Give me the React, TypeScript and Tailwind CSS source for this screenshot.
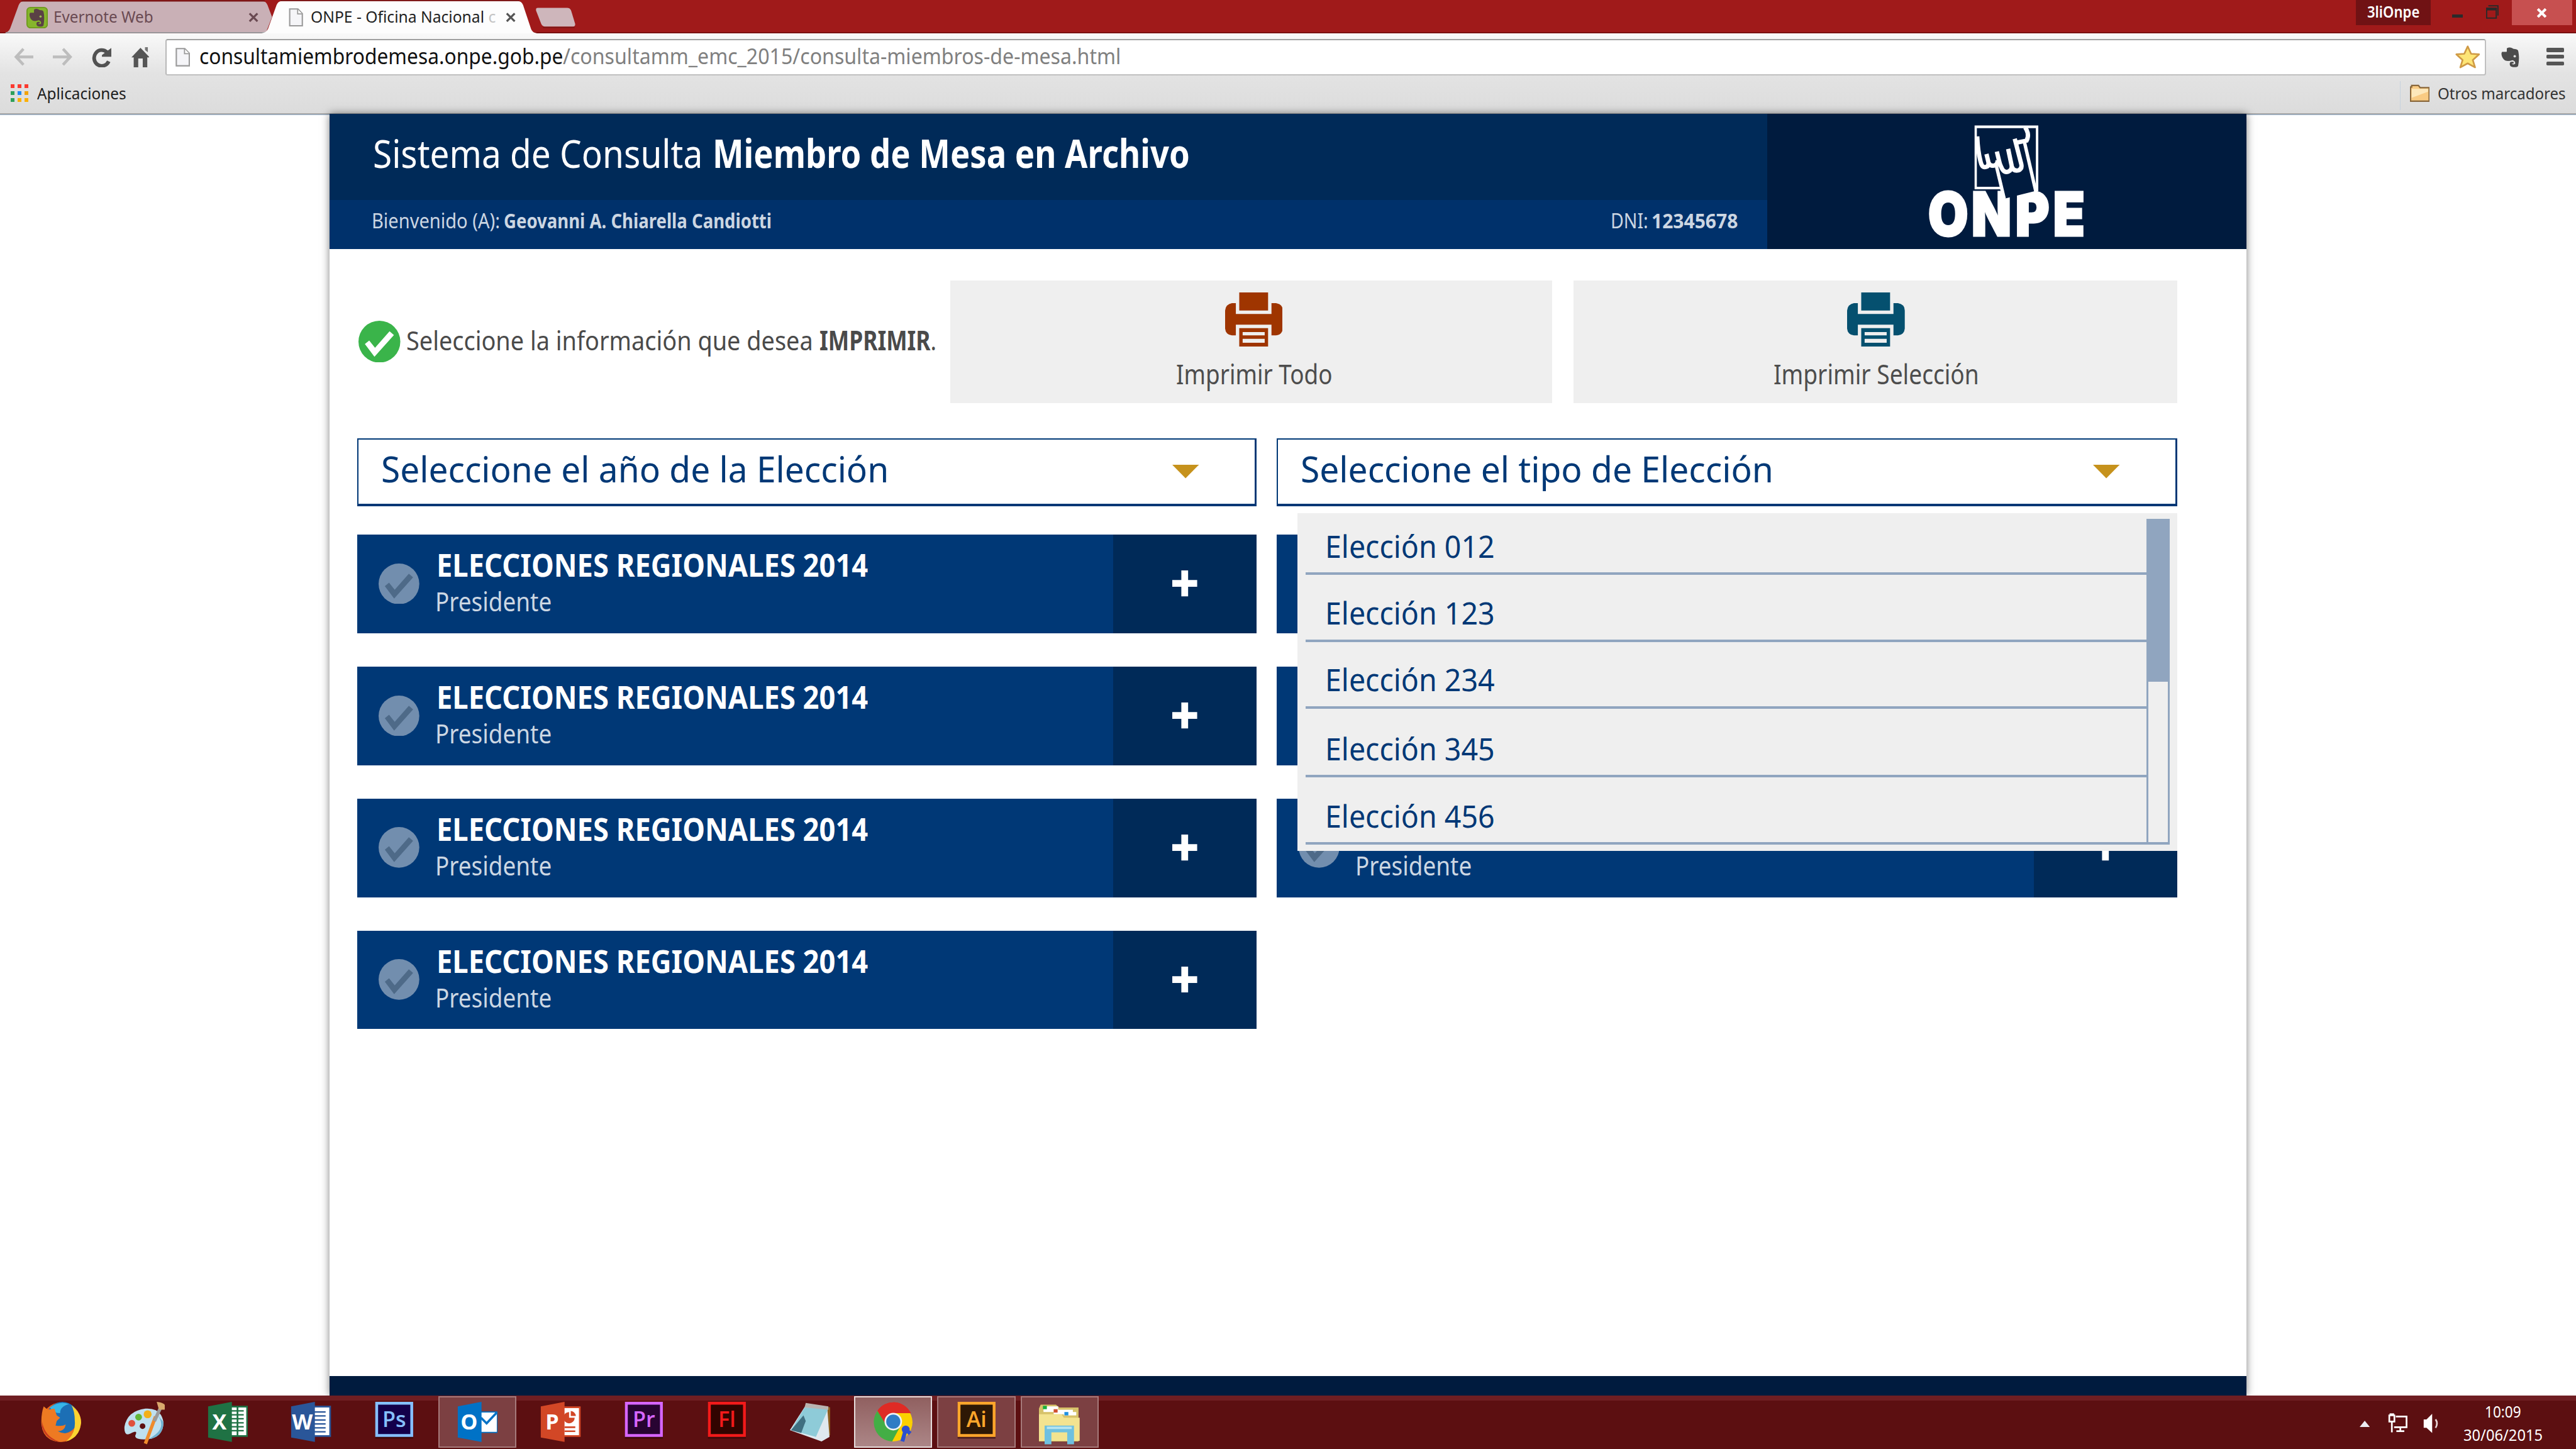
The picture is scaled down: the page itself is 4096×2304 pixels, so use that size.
import { useLayoutEffect, useRef, type ReactNode } from "react";

/** One line of text condensed or widened to the width of its box. */
function Fit({ className, children }: { className: string; children: ReactNode }) {
  const box = useRef<HTMLDivElement>(null);
  const text = useRef<HTMLSpanElement>(null);
  useLayoutEffect(() => {
    if (box.current && text.current) {
      const ratio = box.current.offsetWidth / text.current.offsetWidth;
      text.current.style.transform = `scaleX(${ratio})`;
    }
  }, []);
  return (
    <div ref={box} className={`shrink-0 leading-none whitespace-nowrap ${className}`}>
      <span ref={text} className="block w-max origin-left">
        {children}
      </span>
    </div>
  );
}

/* ---------- Browser chrome ---------- */

function PageIcon({ className }: { className: string }) {
  return (
    <svg viewBox="0 0 26 34" className={`shrink-0 ${className}`}>
      <path d="M1.5 1.5h15l8 8.5v22h-23z" fill="#f5f5f8" stroke="#9a9a9a" strokeWidth="2.4" />
      <path d="M16 2v8.500h8.500" fill="#fff" stroke="#9a9a9a" strokeWidth="2" />
    </svg>
  );
}

function CloseX({ className, width }: { className: string; width: number }) {
  return (
    <svg viewBox="0 0 18 17" className={`shrink-0 ${className}`}>
      <path d="M2 1.500L16 15.500M16 1.500L2 15.500" stroke="currentColor" strokeWidth={width} />
    </svg>
  );
}

const ELEPHANT =
  "M10 2c5-3 9-1 12 1 4 0 7 1 8 3 2 8 2 18 0 27-1 3-10 3-13 1-3-3-2-8 1-8h4v3h-3c0 2 5 2 6 0 0-4-2-5-5-6-6 2-12 2-15-1C1 18-1 11 2 8h8z";

function EvernoteFavicon() {
  return (
    <svg viewBox="0 0 38 38" className="h-[38px] w-[38px] shrink-0">
      <rect x="1" y="1" width="36" height="36" rx="6" fill="#86b52c" stroke="#6d9a1c" strokeWidth="2" />
      <path d={ELEPHANT} transform="translate(5 3) scale(.84 .9)" fill="#5a4145" />
      <circle cx="25" cy="17" r="2" fill="#9bbf4f" />
    </svg>
  );
}

function TitleBar() {
  return (
    <div className="relative flex h-[59px] shrink-0 bg-[#a01a1a]">
      <svg viewBox="0 0 1030 59" className="absolute top-0 left-0 h-[59px] w-[1030px]">
        <rect y="57" width="1030" height="2" fill="#7a1010" />
        <path d="M8 58Q15 57 18 50L33 9Q36 2 42 2H464Q470 2 473 9L481 30L470 58Z" fill="#c9b0b6" />
        <path d="M38 1.500H468" stroke="#7a1414" strokeWidth="2.500" />
        <path d="M10 57.800H472" stroke="#9aa0a4" strokeWidth="2" />
        <path d="M462 59Q471 58 474 51L489 9Q492 2 498 2H916Q922 2 925 9L939 51Q941 58 950 59Z" fill="#fdfdfd" />
        <path d="M496 1H918" stroke="#7a1414" strokeWidth="2" />
        <path d="M951 14H1003Q1008 14 1010 19L1017 42Q1018 47 1013 47H964Q959 47 957 42L948 19Q947 14 951 14Z" fill="#ceb6bb" />
        <path d="M960 48.500H1016" stroke="#7a1414" strokeWidth="2" />
      </svg>
      <div className="relative flex w-[482px] pt-[12px] pl-[47px] text-[#6a4a52]">
        <EvernoteFavicon />
        <Fit className="mt-[2px] ml-[10px] w-[176px] text-[29px]">Evernote Web</Fit>
        <CloseX className="mt-[10px] ml-[168px] h-[17px] w-[18px]" width={3.6} />
      </div>
      <div className="relative flex pt-[14px] pl-[28px]">
        <PageIcon className="h-[33px] w-[26px]" />
        <Fit className="ml-[13px] w-[327px] text-[29px] text-[#222]">
          ONPE - Oficina Nacional <span className="text-[#c4c4c4]">c</span>
        </Fit>
        <CloseX className="mt-[8px] ml-[18px] h-[17px] w-[18px] text-[#555]" width={3.6} />
      </div>
      <div className="ml-auto flex h-[45px] pr-[7px]">
        <div className="h-[45px] w-[132px] bg-[#701214] pt-[7px] pl-[20px]">
          <Fit className="w-[93px] text-[28px] font-semibold text-white">3liOnpe</Fit>
        </div>
        <div className="mt-[26px] ml-[38px] h-[5px] w-[19px] bg-[#2a2a2a]" />
        <svg viewBox="0 0 22 24" className="mt-[9px] ml-[41px] h-[24px] w-[22px]">
          <path d="M4 1.500H21V18.500" fill="none" stroke="#2a2a2a" strokeWidth="2.200" />
          <path d="M1 6H18V23H1Z" fill="none" stroke="#2a2a2a" strokeWidth="2.200" />
          <path d="M0 7H19" stroke="#2a2a2a" strokeWidth="5" />
        </svg>
        <div className="ml-[23px] flex h-[45px] w-[107px] justify-center bg-[#c75050] pt-[14px]">
          <CloseX className="h-[17px] w-[19px] text-white" width={4.6} />
        </div>
      </div>
      <div className="absolute right-0 bottom-0 left-[951px] h-[2px] bg-[#7a1010]" />
    </div>
  );
}

function Toolbar() {
  return (
    <div className="h-[144px] shrink-0 border-b-[1.500px] border-[#9ab4d0]">
      <div className="h-full border-b-[3px] border-[#a8a8a8] bg-linear-to-b from-[#f9f9f9] via-[#e3e3e3] to-[#dcdcdc]">
        <div className="flex h-[84px] pt-[10px] pr-[21px] pl-[24px]">
          <svg viewBox="0 0 35 32" className="mt-[16px] h-[32px] w-[35px]">
            <path d="M17 2L4 16L17 30M4 16H35" fill="none" stroke="#bdbdbd" strokeWidth="5" />
          </svg>
          <svg viewBox="0 0 35 32" className="mt-[16px] ml-[34px] h-[32px] w-[35px]">
            <path d="M18 2L31 16L18 30M31 16H0" fill="none" stroke="#bdbdbd" strokeWidth="5" />
          </svg>
          <svg viewBox="0 0 36 36" className="mt-[14px] ml-[33px] h-[36px] w-[36px]">
            <path d="M28 9A13.500 14 0 1 0 31 25" fill="none" stroke="#525252" strokeWidth="6.500" />
            <path d="M36 1V17H19V14Z" fill="#555" />
          </svg>
          <svg viewBox="0 0 32 36" className="mt-[14px] ml-[35px] h-[36px] w-[32px]">
            <path d="M0 18L16 1L32 18H28V36H20V20H12V36H4V18Z" fill="#555" />
            <path d="M24 0H29V9L24 5Z" fill="#777" />
          </svg>
          <div className="ml-[28px] flex h-[64px] w-[4104px] rounded-[4px] border-[3px] border-t-[#a0a0a0] border-r-[#c0c0c0] border-b-[#c0c0c0] border-l-[#b8b8b8] bg-white">
            <PageIcon className="mt-[12px] ml-[16px] h-[36px] w-[26px]" />
            <Fit className="mt-[9px] ml-[16px] w-[643px] text-[38px] text-[#111]">
              consultamiembrodemesa.onpe.gob.pe
            </Fit>
            <Fit className="mt-[9px] w-[987px] text-[38px] text-[#808080]">
              /consultamm_emc_2015/consulta-miembros-de-mesa.html
            </Fit>
            <svg viewBox="0 0 44 42" className="mt-[9px] mr-[8px] ml-auto h-[42px] w-[44px]">
              <path
                d="M22 2L28 15L42 16L31 26L35 39L22 32L9 39L13 26L2 16L16 15Z"
                fill="#fde576"
                stroke="#cf9a45"
                strokeWidth="3"
                strokeLinejoin="round"
              />
            </svg>
          </div>
          <svg viewBox="0 0 32 36" className="mt-[14px] ml-[27px] h-[36px] w-[32px]">
            <path d={ELEPHANT} fill="#4c4c4c" />
            <path d="M2 8L9 2V8Z" fill="#f4f4f4" />
            <circle cx="24" cy="16" r="2.200" fill="#ddd" />
          </svg>
          <div className="mt-[16px] ml-auto flex w-[31px] flex-col gap-[5px]">
            <div className="h-[7px] rounded-[2px] bg-[#555]" />
            <div className="h-[7px] rounded-[2px] bg-[#555]" />
            <div className="h-[7px] rounded-[2px] bg-[#555]" />
          </div>
        </div>
        <div className="flex pr-[19px] pl-[19px]">
          <div className="mt-[6px] grid h-[31px] w-[31px] grid-cols-3 gap-[5px]">
            <div className="bg-[#fb3a30]" />
            <div className="bg-[#fb3a30]" />
            <div className="bg-[#fb3a30]" />
            <div className="bg-[#2fa05a]" />
            <div className="bg-[#1e8bf5]" />
            <div className="bg-[#f2a30c]" />
            <div className="bg-[#2fa05a]" />
            <div className="bg-[#fbb004]" />
            <div className="bg-[#fbb004]" />
          </div>
          <Fit className="mt-[7px] ml-[16px] w-[158px] text-[29px] text-[#1c1c1c]">Aplicaciones</Fit>
          <div className="ml-auto h-[52px] w-[2px] bg-[#c6d2de]" />
          <svg viewBox="0 0 35 32" className="mt-[6px] ml-[16px] h-[32px] w-[35px]">
            <path d="M3 5V2H15L18 6H34V30H1V5Z" fill="#f9cb83" stroke="#8a683c" strokeWidth="2.500" />
            <path d="M3 8H32V13L3 24Z" fill="#fde8bb" />
          </svg>
          <Fit className="mt-[7px] ml-[14px] w-[226px] text-[29px] text-[#333]">Otros marcadores</Fit>
        </div>
      </div>
    </div>
  );
}

/* ---------- Site ---------- */

function OnpeLogo() {
  return (
    <svg viewBox="0 0 960 690" className="h-[230px] w-[320px]">
      <g fill="#fff">
        <path d="M306 52H644V400H631V66H318V377H450V390H306Z" />
        <text
          x="69 337 607 840"
          y="638"
          transform="scale(.86 1)"
          fontFamily="Inter"
          fontWeight="900"
          fontSize="320"
          stroke="#fff"
          strokeWidth="10"
        >
          ONPE
        </text>
      </g>
      <path d="M428 276L470 439L624 400L572 150L440 270Z" fill="#001b3e" />
      <g fill="none" stroke="#fff" strokeWidth="23">
        <path d="M320 110Q323 190 339 248Q346 278 366 272Q384 267 379 245L369 203" />
        <path d="M380 250Q388 267 408 265Q430 260 428 235M424 190L443 268" />
        <path d="M437 250L452 282Q464 305 486 296Q507 286 502 262L484 176" />
        <path d="M504 270Q512 295 538 290Q559 283 554 258L519 122" />
        <path d="M532 142L582 132Q592 112 588 92Q584 76 574 62" />
        <path d="M422 268L463 440" strokeWidth="18" />
        <path d="M571 142L631 402" strokeWidth="18" />
      </g>
    </svg>
  );
}

function SiteHeader() {
  return (
    <header className="flex h-[239px] bg-[#001b3e]">
      <div className="w-[2542px]">
        <div className="flex h-[153px] bg-[#002a58] pt-[35px] pl-[76px] text-[69px] text-white">
          <Fit className="w-[583px]">Sistema de Consulta</Fit>
          <Fit className="ml-[18px] w-[844px] font-bold">Miembro de Mesa en Archivo</Fit>
        </div>
        <div className="flex h-[86px] bg-[#00316b] pt-[17px] pl-[74px] text-[36px] text-[#ccd6e2]">
          <Fit className="w-[227px]">Bienvenido (A):</Fit>
          <Fit className="ml-[7px] w-[474px] font-bold">Geovanni A. Chiarella Candiotti</Fit>
          <Fit className="ml-auto w-[66px]">DNI:</Fit>
          <Fit className="mr-[52px] ml-[6px] w-[153px] font-bold">12345678</Fit>
        </div>
      </div>
      <div className="pt-[4px] pl-[265px]">
        <OnpeLogo />
      </div>
    </header>
  );
}

function CheckBadge({ className, disc, tick }: { className: string; disc: string; tick: string }) {
  return (
    <svg viewBox="0 0 72 72" className={`shrink-0 ${className}`}>
      <circle cx="36" cy="36" r="36" fill={disc} />
      <path d="M11 40L18.500 34L28.500 46.500L53.500 18L61 24.500L27.500 62Z" fill={tick} />
    </svg>
  );
}

function Printer({ color }: { color: string }) {
  return (
    <svg viewBox="0 0 102 96" className="h-[96px] w-[102px]">
      <g fill={color}>
        <path d="M25 0H76V32H25Z" />
        <path d="M12 19H19V38H82V19H90Q102 21 102 32V64Q101 75 90 76H82V57H19V76H12Q1 75 0 64V32Q1 21 12 19Z" />
        <path
          fillRule="evenodd"
          d="M25 63H76V96H25ZM31 70V76H70V70ZM31 82V89H70V82Z"
        />
      </g>
    </svg>
  );
}

function PrintBar() {
  return (
    <div className="flex h-[217px]">
      <div className="flex w-[1048px] pl-[2px]">
        <CheckBadge className="mt-[71px] h-[74px] w-[74px]" disc="#3ab44a" tick="#fff" />
        <Fit className="mt-[82px] ml-[10px] w-[719px] text-[47px] text-[#4a4a4a]">
          Seleccione la información que desea
        </Fit>
        <Fit className="mt-[82px] ml-[12px] w-[207px] text-[47px] text-[#4a4a4a]">
          <b>IMPRIMIR</b>.
        </Fit>
      </div>
      <button className="flex w-[1064px] flex-col items-center bg-[#efefef] pt-[21px] pl-[10px] text-[48px] text-[#4d4d4d]">
        <Printer color="#9f3500" />
        <Fit className="mt-[24px] w-[276px] text-left">Imprimir Todo</Fit>
      </button>
      <button className="ml-[38px] flex w-[1068px] flex-col items-center bg-[#efefef] pt-[21px] pl-[3px] text-[48px] text-[#4d4d4d]">
        <Printer color="#05506f" />
        <Fit className="mt-[24px] w-[363px] text-left">Imprimir Selección</Fit>
      </button>
    </div>
  );
}

function SelectBox({ width, children }: { width: string; children: string }) {
  return (
    <div className="flex h-[120px] border-[3px] border-r-[4px] border-b-[5px] border-[#003876] bg-white pt-[20px] pr-[99px] pl-[40px]">
      <Fit className={`text-[63px] text-[#003876] ${width}`}>{children}</Fit>
      <svg viewBox="0 0 47 24" className="mt-[25px] ml-auto h-[24px] w-[47px]">
        <path d="M0 0H47L23.500 24Z" fill="#c6921c" />
      </svg>
    </div>
  );
}

function ElectionRow({ title, detail }: { title?: string; detail?: string }) {
  return (
    <div className="flex h-[174.500px] bg-[#003876]">
      <CheckBadge className="mt-[51px] ml-[38px] h-[72px] w-[72px]" disc="#728eae" tick="#4e6a88" />
      <div className="ml-[28px] pt-[26px]">
        <div className="h-[70px] pl-[2px]">
          {title && <Fit className="w-[763px] text-[56px] font-bold text-white">{title}</Fit>}
        </div>
        {detail && <Fit className="w-[206px] text-[46px] text-[#ccd7e3]">{detail}</Fit>}
      </div>
      <div className="ml-auto flex w-[254px] justify-center bg-[#002a58] pt-[64px]">
        <svg viewBox="0 0 44 46" className="h-[46px] w-[44px]">
          <path d="M22 0V46M0 23H44" stroke="#fff" strokeWidth="12" />
        </svg>
      </div>
    </div>
  );
}

const OPTIONS = [
  { label: "Elección 012", height: "h-[99px]" },
  { label: "Elección 123", height: "h-[118px]" },
  { label: "Elección 234", height: "h-[118px]" },
  { label: "Elección 345", height: "h-[122px]" },
  { label: "Elección 456", height: "h-[119px]" },
];

function TypeMenu() {
  return (
    <div className="absolute top-[133px] right-0 flex h-[597px] w-[1556px] bg-[#efefef] pt-[10px] pl-[15px]">
      <ul className="w-[1486px]">
        {OPTIONS.map((option) => (
          <li
            key={option.label}
            className={`flex items-end border-b-[4.500px] border-[#90a5bf] pb-[20px] pl-[34px] ${option.height}`}
          >
            <Fit className="w-[300px] text-[54px] text-[#003876]">{option.label}</Fit>
          </li>
        ))}
      </ul>
      <div className="h-[576px] w-[42px] border-[3.500px] border-b-[4.500px] border-[#90a5bf]">
        <div className="h-[284px] bg-[#90a5bf]" />
      </div>
    </div>
  );
}

const REGIONAL = { title: "ELECCIONES REGIONALES 2014", detail: "Presidente" };

function Site() {
  return (
    <main className="relative -mt-[2px] ml-[583px] flex h-[2267px] w-[3389px] shrink-0 flex-col bg-white shadow-[0_0_14px_rgba(0,0,0,0.5)]">
      <SiteHeader />
      <div className="flex-1 pt-[56px] pl-[49px]">
        <PrintBar />
        <div className="mt-[62px] flex gap-[36px]">
          <div className="w-[1590px]">
            <SelectBox width="w-[898px]">Seleccione el año de la Elección</SelectBox>
            <div className="mt-[50px] flex flex-col gap-[59px]">
              <ElectionRow {...REGIONAL} />
              <ElectionRow {...REGIONAL} />
              <ElectionRow {...REGIONAL} />
              <ElectionRow {...REGIONAL} />
            </div>
          </div>
          <div className="relative w-[1592px]">
            <SelectBox width="w-[836px]">Seleccione el tipo de Elección</SelectBox>
            <div className="mt-[50px] flex flex-col gap-[59px]">
              <ElectionRow />
              <ElectionRow />
              <ElectionRow detail="Presidente" />
            </div>
            <TypeMenu />
          </div>
        </div>
      </div>
      <footer className="h-[35px] bg-[#001b3e]" />
    </main>
  );
}

/* ---------- Taskbar ---------- */

function AppIcon({ children }: { children: ReactNode }) {
  return (
    <svg viewBox="0 0 72 76" className="h-[76px] w-[72px]">
      {children}
    </svg>
  );
}

function AdobeIcon({ letters, color, dark }: { letters: string; color: string; dark: string }) {
  return (
    <AppIcon>
      <rect x="3" y="2" width="67" height="63" fill="#2a0506" opacity=".6" />
      <rect x="3" width="67" height="62" fill={color} />
      <rect x="8" y="5" width="57" height="52" fill={dark} />
      <text x="36.500" y="45" textAnchor="middle" fontSize="38" fontWeight="600" fontFamily="Open Sans" fill={color}>
        {letters}
      </text>
    </AppIcon>
  );
}

function OfficeIcon({ letter, color, children }: { letter: string; color: string; children: ReactNode }) {
  return (
    <AppIcon>
      {children}
      <path d="M1 8L43 0V71L1 63Z" fill={color} />
      <text x="21" y="49" textAnchor="middle" fontSize="38" fontWeight="700" fontFamily="Open Sans" fill="#fff">
        {letter}
      </text>
    </AppIcon>
  );
}

function Firefox() {
  return (
    <AppIcon>
      <circle cx="36" cy="36" r="35" fill="#e8661c" />
      <circle cx="38" cy="28" r="28" fill="#1c6fb5" />
      <path d="M16 10Q32-2 50 4Q34 8 34 20Q22 20 16 10Z" fill="#38b6e8" />
      <path d="M54 6Q72 20 71 38Q68 64 44 70Q62 56 60 34Q60 16 54 6Z" fill="#fbd431" />
      <path d="M5 8L12 14L24 12L28 24L34 28L28 34L26 42Q38 44 44 40Q42 52 30 52Q44 60 58 50Q52 70 34 71Q4 69 1 40Q0 22 5 8Z" fill="#ee7a22" />
      <path d="M2 34Q6 62 34 71Q8 68 2 44Z" fill="#c93a1e" />
    </AppIcon>
  );
}

function Paint() {
  return (
    <AppIcon>
      <path d="M38 12Q66 10 70 36Q70 62 44 66Q20 68 20 60Q26 48 12 56Q0 62 1 44Q6 16 38 12Z" fill="#bfe0ef" />
      <path d="M60 24Q76 46 50 62L44 66Q70 62 70 36Z" fill="#6fb0d0" />
      <circle cx="14" cy="38" r="6" fill="#e0503c" />
      <circle cx="26" cy="27" r="6" fill="#62b83a" />
      <circle cx="42" cy="22" r="7" fill="#f3b018" />
      <circle cx="33" cy="43" r="5" fill="#5c0f11" />
      <path d="M56 26L38 74" stroke="#ef8b2c" strokeWidth="6" />
      <path d="M64 12L54 34" stroke="#9a9a9a" strokeWidth="6" />
      <path d="M58 0Q78 2 72 14H62Z" fill="#d9a86c" />
    </AppIcon>
  );
}

function Notepad() {
  return (
    <AppIcon>
      <path d="M64 8L72 10V58L64 64Z" fill="#8a5c1e" />
      <path d="M28 6L66 10L70 62L56 70L0 50Z" fill="#dfe8ee" />
      <path d="M26 10L68 12L46 62L2 50Z" fill="#8ecbd8" />
      <path d="M24 24L2 50L20 55L28 34Z" fill="#3f6f80" />
      <path d="M28 2L68 8V14L26 10Z" fill="#b9b4b0" />
    </AppIcon>
  );
}

function Chrome() {
  return (
    <AppIcon>
      <circle cx="36" cy="36" r="34" fill="#fbd000" />
      <path d="M8 16A34 34 0 0 1 67 20H36L24 46Z" fill="#df2b25" />
      <path d="M8 16A34 34 0 0 0 34 70L47 46L24 42Z" fill="#43ae45" />
      <path d="M8 16A34 34 0 0 1 67 20H36Z" fill="#df2b25" />
      <circle cx="36" cy="35" r="15.500" fill="#eef2f6" />
      <circle cx="36" cy="35" r="12.500" fill="#2f7cc4" />
      <circle cx="58" cy="49" r="7" fill="#2c50cf" />
      <path d="M58 49L52 70M58 49L66 56" stroke="#2c50cf" strokeWidth="7" />
    </AppIcon>
  );
}

function Explorer() {
  return (
    <AppIcon>
      <path d="M0 70V12L3 5H30L36 10H70V70Z" fill="#d7c26a" />
      <path d="M8 8H34V18H8Z" fill="#fff" />
      <path d="M7 7H14V13H7Z" fill="#18b03c" />
      <path d="M26 14H60V22H26Z" fill="#fff" />
      <path d="M26 13H33V19H26Z" fill="#d05030" />
      <path d="M0 22H40L44 28H72V69H0Z" fill="#f3e390" />
      <path d="M44 18H66V24H44Z" fill="#fff" />
      <path d="M45 18H52V24H45Z" fill="#1e90e0" />
      <path d="M16 75V48H56V75" fill="none" stroke="#6fc0e0" strokeWidth="12" />
      <path d="M14 46H58" stroke="#b5e4f2" strokeWidth="4" />
    </AppIcon>
  );
}

const APPS: { icon: ReactNode; tile: string }[] = [
  { icon: <Firefox />, tile: "border-transparent" },
  { icon: <Paint />, tile: "border-transparent" },
  {
    icon: (
      <OfficeIcon letter="X" color="#1f7244">
        <path d="M40 8.500H70V60.500H40Z" fill="#fff" stroke="#1f7244" strokeWidth="3" />
        <path d="M42 16H64M42 23H64M42 30H64M42 37H64M42 44H64M42 51H64" stroke="#1f7244" strokeWidth="2.500" />
        <path d="M53 10V59" stroke="#1f7244" strokeWidth="3" />
      </OfficeIcon>
    ),
    tile: "border-transparent",
  },
  {
    icon: (
      <OfficeIcon letter="W" color="#2a5699">
        <path d="M40 8.500H70V60.500H40Z" fill="#fff" stroke="#2a5699" strokeWidth="3" />
        <path d="M42 18H62M42 25H62M42 32H62M42 39H62M42 46H62M42 53H62" stroke="#2a5699" strokeWidth="2.500" />
      </OfficeIcon>
    ),
    tile: "border-transparent",
  },
  { icon: <AdobeIcon letters="Ps" color="#86c0ff" dark="#13004a" />, tile: "border-transparent" },
  {
    icon: (
      <OfficeIcon letter="O" color="#0072c6">
        <path d="M40 18H71V54H40Z" fill="#fff" stroke="#0072c6" strokeWidth="2" />
        <path d="M42 28L52 38L70 19" fill="none" stroke="#0072c6" strokeWidth="4" />
      </OfficeIcon>
    ),
    tile: "border-[#a67a7b] bg-[#7c4042]",
  },
  {
    icon: (
      <OfficeIcon letter="P" color="#d24726">
        <path d="M40 9.500H70V60.500H40Z" fill="#fff" stroke="#d24726" strokeWidth="3" />
        <path d="M43 45H62M43 52H62" stroke="#d24726" strokeWidth="3" />
        <path d="M51 18A10 10 0 1 0 61 28H51Z" fill="#d24726" />
        <path d="M54 16A10 10 0 0 1 63 25H54Z" fill="#d24726" />
      </OfficeIcon>
    ),
    tile: "border-transparent",
  },
  { icon: <AdobeIcon letters="Pr" color="#d766ff" dark="#280432" />, tile: "border-transparent" },
  { icon: <AdobeIcon letters="Fl" color="#f31a1a" dark="#320400" />, tile: "border-transparent" },
  { icon: <Notepad />, tile: "border-transparent" },
  { icon: <Chrome />, tile: "border-[#e6dcdc] bg-linear-to-b from-[#906060] to-[#ac8687]" },
  { icon: <AdobeIcon letters="Ai" color="#ffa62b" dark="#2e1805" />, tile: "border-[#a67a7b] bg-[#7c4042]" },
  { icon: <Explorer />, tile: "border-[#a67a7b] bg-[#7c4042]" },
];

function Taskbar() {
  return (
    <div className="relative flex h-[94px] shrink-0 border-t-[9px] border-[#6f1e22] bg-[#5c0f11]">
      <div className="-mt-[8px] flex pl-[35px]">
        {APPS.map((app, i) => (
          <div key={i} className="flex w-[147.100px] justify-center">
            <div className={`flex h-[91px] w-[138px] justify-center border-[3px] pt-[8px] ${app.tile}`}>{app.icon}</div>
          </div>
        ))}
      </div>
      <div className="ml-auto flex pr-[59px] text-white">
        <svg viewBox="0 0 18 11" className="mt-[35px] h-[11px] w-[18px]">
          <path d="M9 0L18 11H0Z" fill="#eceaf0" />
        </svg>
        <svg viewBox="0 0 38 36" className="mt-[21px] ml-[31px] h-[36px] w-[38px]">
          <path d="M15 7H34V26H12M16 33H30M23 26V33M8 16V35" fill="none" stroke="#fff" strokeWidth="3" />
          <path d="M3.500 5H12.500V16H3.500Z" fill="#5c0f11" stroke="#fff" strokeWidth="3" />
          <path d="M4 3H12" stroke="#fff" strokeWidth="3" />
        </svg>
        <svg viewBox="0 0 30 36" className="mt-[22px] ml-[24px] h-[36px] w-[30px]">
          <path d="M2 11H7L17 1V35L7 26H2Z" fill="#fff" />
          <path d="M23 11Q28 18 23 26" fill="none" stroke="#e6d4d4" strokeWidth="3" />
        </svg>
        <div className="ml-[43px] flex flex-col items-center pt-[4px] text-[29px]">
          <Fit className="w-[64px]">10:09</Fit>
          <Fit className="mt-[12px] w-[140px]">30/06/2015</Fit>
        </div>
      </div>
    </div>
  );
}

export default function App() {
  return (
    <div className="h-[2304px] w-[4096px] overflow-hidden bg-white">
      <div className="flex h-[2562px] w-[4555px] flex-col overflow-hidden bg-white font-['Noto_Sans',sans-serif] [zoom:0.89925]">
        <TitleBar />
        <Toolbar />
        <Site />
        <Taskbar />
      </div>
    </div>
  );
}
